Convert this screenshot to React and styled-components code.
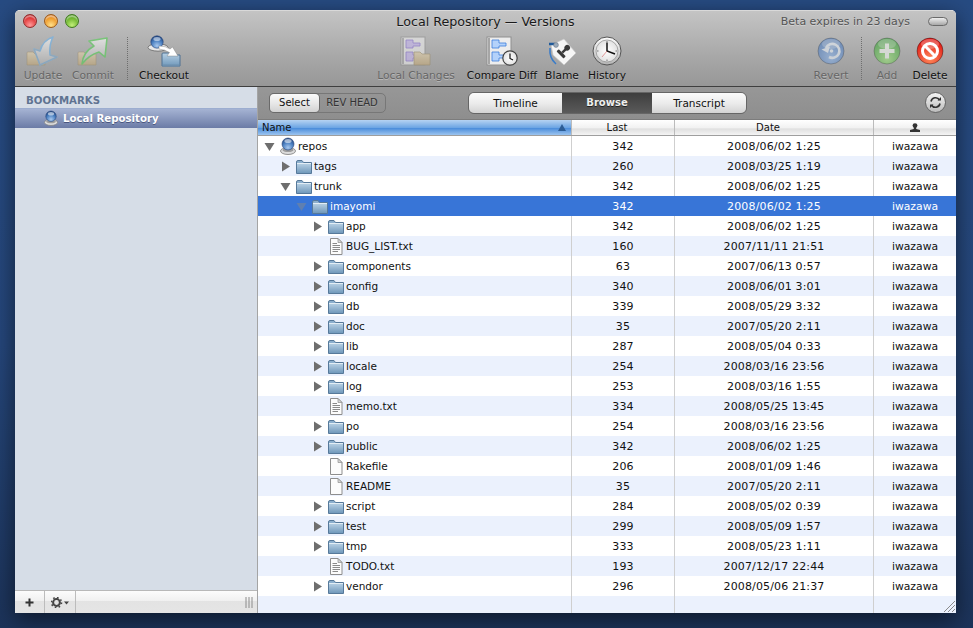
import React from 'react';
import styled, { createGlobalStyle } from 'styled-components';

const FONT = '"DejaVu Sans", "Liberation Sans", sans-serif';

const rows = [
  { level: 0, type: 'repo', open: true, name: 'repos', last: 342, date: '2008/06/02 1:25' },
  { level: 1, type: 'folder', name: 'tags', last: 260, date: '2008/03/25 1:19' },
  { level: 1, type: 'folder', open: true, name: 'trunk', last: 342, date: '2008/06/02 1:25' },
  { level: 2, type: 'folder', open: true, selected: true, name: 'imayomi', last: 342, date: '2008/06/02 1:25' },
  { level: 3, type: 'folder', name: 'app', last: 342, date: '2008/06/02 1:25' },
  { level: 3, type: 'text', name: 'BUG_LIST.txt', last: 160, date: '2007/11/11 21:51' },
  { level: 3, type: 'folder', name: 'components', last: 63, date: '2007/06/13 0:57' },
  { level: 3, type: 'folder', name: 'config', last: 340, date: '2008/06/01 3:01' },
  { level: 3, type: 'folder', name: 'db', last: 339, date: '2008/05/29 3:32' },
  { level: 3, type: 'folder', name: 'doc', last: 35, date: '2007/05/20 2:11' },
  { level: 3, type: 'folder', name: 'lib', last: 287, date: '2008/05/04 0:33' },
  { level: 3, type: 'folder', name: 'locale', last: 254, date: '2008/03/16 23:56' },
  { level: 3, type: 'folder', name: 'log', last: 253, date: '2008/03/16 1:55' },
  { level: 3, type: 'text', name: 'memo.txt', last: 334, date: '2008/05/25 13:45' },
  { level: 3, type: 'folder', name: 'po', last: 254, date: '2008/03/16 23:56' },
  { level: 3, type: 'folder', name: 'public', last: 342, date: '2008/06/02 1:25' },
  { level: 3, type: 'file', name: 'Rakefile', last: 206, date: '2008/01/09 1:46' },
  { level: 3, type: 'file', name: 'README', last: 35, date: '2007/05/20 2:11' },
  { level: 3, type: 'folder', name: 'script', last: 284, date: '2008/05/02 0:39' },
  { level: 3, type: 'folder', name: 'test', last: 299, date: '2008/05/09 1:57' },
  { level: 3, type: 'folder', name: 'tmp', last: 333, date: '2008/05/23 1:11' },
  { level: 3, type: 'text', name: 'TODO.txt', last: 193, date: '2007/12/17 22:44' },
  { level: 3, type: 'folder', name: 'vendor', last: 296, date: '2008/05/06 21:37' },
];

const Global = createGlobalStyle`
  html, body { margin: 0; height: 100%; }
  body {
    background: linear-gradient(180deg, #274b82 0%, #25467a 55%, #1c3359 100%);
    font-family: ${FONT};
    overflow: hidden;
  }
`;

const Desktop = styled.div`
  width: 973px;
  height: 628px;
  padding: 10px 0 0 15px;
  box-sizing: border-box;
`;

const Window = styled.div`
  width: 941px;
  height: 603px;
  display: flex;
  flex-direction: column;
  border-radius: 5px 5px 0 0;
  overflow: hidden;
  box-shadow: 0 6px 22px rgba(0, 0, 0, 0.55);
  background: #fff;
`;

const Chrome = styled.div`
  height: 76px;
  flex: none;
  box-sizing: border-box;
  border-top: 1px solid #d9d9d9;
  background: linear-gradient(180deg, #c4c4c4 0%, #a8a8a8 60%, #979797 100%);
`;

const TitleRow = styled.div`
  height: 20px;
  display: grid;
  grid-template-columns: 1fr auto 1fr;
  align-items: center;
  padding: 0 8px;
`;

const Lights = styled.div`
  display: flex;
  gap: 7px;
  align-items: center;
`;

const Light = styled.span`
  width: 14px;
  height: 14px;
  border-radius: 50%;
  box-sizing: border-box;
  border: 1px solid ${p => p.$edge};
  background: radial-gradient(circle at 50% 85%, ${p => p.$glow} 0%, ${p => p.$base} 60%, ${p => p.$dark} 100%);
  box-shadow: inset 0 2px 1px rgba(255, 255, 255, 0.45);
`;

const Title = styled.div`
  font-size: 12.7px;
  color: #1a1a1a;
  text-shadow: 0 1px 0 rgba(255, 255, 255, 0.35);
`;

const Beta = styled.div`
  display: flex;
  justify-content: flex-end;
  align-items: center;
  gap: 18px;
  font-size: 11px;
  color: #555;
  text-shadow: 0 1px 0 rgba(255, 255, 255, 0.35);
`;

const Pill = styled.span`
  width: 20px;
  height: 9px;
  box-sizing: border-box;
  border-radius: 5px;
  border: 1px solid #6a6a6a;
  background: linear-gradient(180deg, #eee, #a8a8a8);
`;

const Toolbar = styled.div`
  height: 55px;
  display: grid;
  grid-template-columns: 356px 1fr auto;
  padding: 0 8px 0 3px;
`;

const ToolGroup = styled.div`
  display: flex;
`;

const Tool = styled.div`
  width: ${p => p.$w}px;
  flex: none;
  display: flex;
  flex-direction: column;
  align-items: center;
  font-size: 10.7px;
  line-height: 13px;
  white-space: nowrap;
  color: ${p => (p.$off ? '#666' : '#111')};
  text-shadow: 0 1px 0 rgba(255, 255, 255, 0.3);
`;

const ToolIcon = styled.div`
  height: 38px;
  box-sizing: border-box;
  padding-top: 2px;
  display: flex;
  align-items: center;
  justify-content: center;
  opacity: ${p => (p.$off ? 0.6 : 1)};
`;

const Dotted = styled.div`
  width: ${p => p.$w}px;
  flex: none;
  display: flex;
  justify-content: center;
  padding-top: 6px;
  height: 43px;
  &::before {
    content: '';
    border-left: 1px dotted #6e6e6e;
  }
`;

const Body = styled.div`
  flex: 1;
  min-height: 0;
  display: flex;
  border-top: 1px solid #3f3f3f;
`;

const Sidebar = styled.div`
  width: 242px;
  flex: none;
  display: flex;
  flex-direction: column;
  background: #d6dde7;
  border-right: 1px solid #a4a4a4;
`;

const SideHead = styled.div`
  height: 21px;
  box-sizing: border-box;
  padding: 7px 0 0 11px;
  font-size: 10.2px;
  line-height: 13px;
  font-weight: bold;
  color: #5f7391;
`;

const SideItem = styled.div`
  height: 20px;
  display: flex;
  align-items: center;
  gap: 5px;
  padding: 0 0 1px 29px;
  font-size: 10.2px;
  font-weight: bold;
  color: #fff;
  text-shadow: 0 1px 0 rgba(40, 50, 90, 0.6);
  border-top: 1px solid #9cadd0;
  box-sizing: border-box;
  background: linear-gradient(180deg, #a5b3d3, #6b7ba6);
`;

const SideFill = styled.div`
  flex: 1;
`;

const SideBar = styled.div`
  height: 23px;
  display: flex;
  align-items: stretch;
  box-sizing: border-box;
  border-top: 1px solid #b8b8b8;
  background: linear-gradient(180deg, #fcfcfc 0%, #f0f0f0 45%, #e3e3e3 46%, #e5e5e5 100%);
`;

const SideBtn = styled.div`
  width: ${p => p.$w}px;
  display: flex;
  align-items: center;
  justify-content: center;
  border-right: 1px solid #bcbcbc;
  box-sizing: border-box;
`;

const Grip = styled.div`
  flex: 1;
  display: flex;
  justify-content: flex-end;
  align-items: center;
  padding-right: 4px;
`;

const Main = styled.div`
  flex: 1;
  min-width: 0;
  display: flex;
  flex-direction: column;
  position: relative;
`;

const SubBar = styled.div`
  height: 33px;
  flex: none;
  box-sizing: border-box;
  padding: 6px 10px 0 11px;
  display: flex;
  align-items: flex-start;
  background: linear-gradient(180deg, #979797, #8e8e8e);
  border-bottom: 1px solid #7c7c7c;
`;

const RevBox = styled.div`
  width: 117px;
  height: 20px;
  display: flex;
  box-sizing: border-box;
  border: 1px solid #777;
  border-radius: 5px;
  font-size: 10px;
  line-height: 18px;
  color: #333;
`;

const SelectBtn = styled.div`
  width: 49px;
  text-align: center;
  color: #111;
  border-radius: 4px;
  box-shadow: 0 0 0 1px #6a6a6a;
  background: linear-gradient(180deg, #fafafa, #e8e8e8 50%, #d2d2d2);
`;

const RevText = styled.div`
  flex: 1;
  text-align: center;
  text-shadow: 0 1px 0 rgba(255, 255, 255, 0.2);
`;

const Tabs = styled.div`
  margin-left: 82px;
  margin-top: -1px;
  display: flex;
  height: 22px;
  box-sizing: border-box;
  border: 1px solid #666;
  border-radius: 6px;
  overflow: hidden;
`;

const Tab = styled.div`
  width: ${p => p.$w}px;
  text-align: center;
  font-size: ${p => (p.$on ? 10 : 10.5)}px;
  line-height: 20px;
  color: ${p => (p.$on ? '#eee' : '#111')};
  font-weight: ${p => (p.$on ? 'bold' : 'normal')};
  text-shadow: ${p => (p.$on ? '0 1px 0 #222' : 'none')};
  background: ${p =>
    p.$on
      ? 'linear-gradient(180deg, #3e3e3e, #5a5a5a)'
      : 'linear-gradient(180deg, #fbfbfb, #ececec 50%, #d3d3d3)'};
`;

const Refresh = styled.div`
  margin-left: auto;
  margin-top: -1px;
  width: 21px;
  height: 21px;
  box-sizing: border-box;
  border-radius: 50%;
  border: 1px solid #666;
  display: flex;
  align-items: center;
  justify-content: center;
  background: linear-gradient(180deg, #f4f4f4, #bcbcbc);
`;

const COLS = '314px 103px 199px 1fr';

const HeadRow = styled.div`
  height: 16px;
  flex: none;
  display: grid;
  grid-template-columns: ${COLS};
  box-sizing: border-box;
  border-bottom: 1px solid #9e9e9e;
`;

const HeadCell = styled.div`
  display: flex;
  align-items: center;
  justify-content: ${p => (p.$left ? 'space-between' : 'center')};
  box-sizing: border-box;
  padding: ${p => (p.$left ? '0 5px 0 4px' : p.$shift ? '0 12px 0 0' : '0')};
  font-size: 10px;
  color: #111;
  border-right: 1px solid #bbb;
  background: ${p =>
    p.$on
      ? 'linear-gradient(180deg, #b6d3f2, #6ea6e4 50%, #4b8ddb 55%, #9cc4ef)'
      : 'linear-gradient(180deg, #fff, #f2f2f2 50%, #e0e0e0 60%, #f4f4f4)'};
  &:last-child { border-right: 0; }
`;

const Rows = styled.div`
  flex: 1;
  min-height: 0;
  display: flex;
  flex-direction: column;
`;

const Row = styled.div`
  height: 20px;
  flex: none;
  display: grid;
  grid-template-columns: ${COLS};
  font-size: 10.5px;
  color: ${p => (p.$selected ? '#fff' : '#111')};
  background: ${p => (p.$selected ? '#3875d7' : p.$alt ? '#ebf1fd' : '#fff')};
`;

const Filler = styled(Row)`
  flex: 1;
  height: auto;
`;

const Cell = styled.div`
  display: flex;
  align-items: center;
  justify-content: center;
  white-space: nowrap;
  box-sizing: border-box;
  border-right: 1px solid ${p => (p.$selected ? 'transparent' : '#cfcfcf')};
  &:last-child { border-right: 0; }
`;

const NumCell = styled(Cell)`
  font-size: 11px;
  letter-spacing: 0.15px;
`;

const UserCell = styled(Cell)`
  font-size: 10.8px;
`;

const NameCell = styled(Cell)`
  justify-content: flex-start;
  padding-left: ${p => p.$level * 16 + 6}px;
`;

const Disclosure = styled.span`
  width: 11px;
  height: 11px;
  flex: none;
  display: flex;
  align-items: center;
  justify-content: center;
  margin-right: 5px;
`;

const NameText = styled.span`
  margin-left: 2px;
`;

const Resize = styled.svg`
  position: absolute;
  right: 1px;
  bottom: 1px;
`;

const Defs = styled.svg`
  display: block;
  width: 0;
  height: 0;
`;

const SharedDefs = () => (
  <Defs>
    <defs>
      <linearGradient id="folderBody" x1="0" y1="0" x2="0" y2="1">
        <stop offset="0" stopColor="#b7d0e4" />
        <stop offset="1" stopColor="#7199bb" />
      </linearGradient>
      <linearGradient id="folderTan" x1="0" y1="0" x2="0" y2="1">
        <stop offset="0" stopColor="#e6d5b0" />
        <stop offset="1" stopColor="#c3a877" />
      </linearGradient>
      <linearGradient id="silver" x1="0" y1="0" x2="0" y2="1">
        <stop offset="0" stopColor="#fdfdfd" />
        <stop offset="1" stopColor="#b4b4b4" />
      </linearGradient>
      <radialGradient id="ball" cx="0.5" cy="0.8" r="0.8">
        <stop offset="0" stopColor="#a8c8ee" />
        <stop offset="0.55" stopColor="#4a7fc0" />
        <stop offset="1" stopColor="#1d3f78" />
      </radialGradient>
      <radialGradient id="blueBtn" cx="0.5" cy="0.75" r="0.8">
        <stop offset="0" stopColor="#8fb6ea" />
        <stop offset="1" stopColor="#3a6cb4" />
      </radialGradient>
      <radialGradient id="greenBtn" cx="0.5" cy="0.8" r="0.8">
        <stop offset="0" stopColor="#9fe47c" />
        <stop offset="1" stopColor="#2d9a2d" />
      </radialGradient>
      <radialGradient id="redBtn" cx="0.5" cy="0.8" r="0.8">
        <stop offset="0" stopColor="#ff8a5a" />
        <stop offset="1" stopColor="#dd0f0f" />
      </radialGradient>
      <radialGradient id="clockFace" cx="0.5" cy="0.5" r="0.6">
        <stop offset="0" stopColor="#ffffff" />
        <stop offset="1" stopColor="#dcdcdc" />
      </radialGradient>
    </defs>
  </Defs>
);

const Triangle = ({ open, selected }) => (
  <svg width="11" height="11" viewBox="0 0 11 11">
    {open ? (
      <path d="M0.5 2 L10.5 2 L5.5 10 Z" fill={selected ? '#5f7fb0' : '#6e6e6e'} />
    ) : (
      <path d="M2 0.5 L10 5.5 L2 10.5 Z" fill="#6e6e6e" />
    )}
  </svg>
);

const RepoIcon = ({ size = 16 }) => (
  <svg width={size} height={size + 2} viewBox="0 0 16 18">
    <ellipse cx="8" cy="14" rx="7.5" ry="3.5" fill="#dcdcdc" stroke="#7b7b7b" strokeWidth="0.8" />
    <ellipse cx="8" cy="13" rx="5.5" ry="2" fill="#9d9d9d" />
    <circle cx="8" cy="7" r="6" fill="url(#ball)" stroke="#27457a" strokeWidth="0.6" />
    <ellipse cx="8" cy="4" rx="3.6" ry="2" fill="#fff" opacity="0.55" />
  </svg>
);

const FolderIcon = () => (
  <svg width="16" height="15" viewBox="0 0 16 15">
    <path d="M0.5 3 Q0.5 1.5 2 1.5 L6 1.5 L7.5 3.5 L15.5 3.5 L15.5 14.5 L0.5 14.5 Z" fill="#8cafcd" stroke="#56799a" />
    <rect x="1" y="4.5" width="14" height="9.5" fill="url(#folderBody)" />
    <path d="M1 4.5 H15" stroke="#e2edf5" />
  </svg>
);

const DocIcon = ({ lines }) => (
  <svg width="16" height="17" viewBox="-1 0 16 17">
    <path d="M1.5 0.5 H9 L13 4.5 V16.5 H1.5 Z" fill="#fcfcfc" stroke="#8e8e8e" />
    <path d="M9 0.5 V4.5 H13 Z" fill="#d8d8d8" stroke="#8e8e8e" strokeWidth="0.7" />
    {lines && <path d="M3.5 5.5 H8 M3.5 7.5 H11 M3.5 9.5 H11 M3.5 11.5 H11 M3.5 13.5 H9" stroke="#8a8a8a" />}
  </svg>
);

const RowIcon = ({ type }) => {
  if (type === 'repo') return <RepoIcon />;
  if (type === 'folder') return <FolderIcon />;
  return <DocIcon lines={type === 'text'} />;
};

const UpdateIcon = () => (
  <svg width="36" height="32" viewBox="0 0 36 32">
    <path d="M2 18 Q2 17 3 17 H8 L10 19 H20 V30 H2 Z" fill="url(#folderTan)" stroke="#a08a62" strokeWidth="0.6" />
    <path d="M28 2 Q18 5 15 16 L9 14 L15 30 L32 22 L25 20 Q24 10 28 2 Z" fill="url(#silver)" stroke="#6cb2ea" strokeWidth="1.6" strokeLinejoin="round" />
    <path d="M15 16 L9 14 L15 30 L32 22 L25 20" fill="none" stroke="#9a9a9a" strokeWidth="0.5" />
  </svg>
);

const CommitIcon = () => (
  <svg width="36" height="32" viewBox="0 0 36 32">
    <path d="M3 18 Q3 17 4 17 H9 L11 19 H21 V30 H3 Z" fill="url(#folderTan)" stroke="#a08a62" strokeWidth="0.6" />
    <path d="M32 3 L14 6 L19 11 Q8 17 7 29 Q14 20 24 17 L30 22 Z" fill="url(#silver)" stroke="#55d055" strokeWidth="1.6" strokeLinejoin="round" />
  </svg>
);

const CheckoutIcon = () => (
  <svg width="34" height="34" viewBox="0 0 34 34">
    <ellipse cx="11" cy="13.5" rx="10" ry="3.6" fill="#e8e8e8" stroke="#5c5c5c" strokeWidth="0.7" />
    <circle cx="10" cy="8" r="6.2" fill="url(#ball)" stroke="#27457a" strokeWidth="0.6" />
    <ellipse cx="10" cy="5" rx="3.6" ry="2" fill="#fff" opacity="0.5" />
    <path d="M15 20 Q15 19 16 19 H24 L26 21 H33 V32 H15 Z" fill="url(#folderBody)" stroke="#4e7192" />
    <rect x="15.5" y="30.5" width="17" height="2" fill="#6d8fae" />
    <path d="M12 12 Q19 12 23 15 L25.5 13 L31 22 L20 22 L22.5 18.5 Q18 15.5 12 15 Z" fill="#fff" stroke="#777" strokeWidth="0.4" />
  </svg>
);

const DiffPage = ({ tint, edge }) => (
  <>
    <rect x="1" y="1" width="24" height="28" fill="#ededed" stroke="#8f8f8f" />
    <path d="M2 2 H4 V28 H2 Z" fill="#777" opacity="0.6" />
    <path d="M6 4 H13 V7 H20 V10 H13 V12 H6 Z" fill={tint} stroke={edge} strokeWidth="0.8" />
    <path d="M6 16 H13 V19 H20 V22 H13 V25 H6 Z" fill={tint} stroke={edge} strokeWidth="0.8" />
  </>
);

const LocalChangesIcon = () => (
  <svg width="32" height="30" viewBox="0 0 32 30">
    <DiffPage tint="#c8b8f2" edge="#8369d4" />
    <path d="M14 16 H20 L22 18 H30 V29 H14 Z" fill="url(#folderTan)" stroke="#9a8860" strokeWidth="0.7" />
  </svg>
);

const CompareDiffIcon = () => (
  <svg width="32" height="30" viewBox="0 0 32 30">
    <DiffPage tint="#b4d2fa" edge="#3e7fdc" />
    <circle cx="24" cy="22" r="7.2" fill="url(#clockFace)" stroke="#444" strokeWidth="1.2" />
    <path d="M24 17.5 V22.5 L27 24" fill="none" stroke="#111" strokeWidth="1.2" />
  </svg>
);

const BlameIcon = () => (
  <svg width="30" height="30" viewBox="0 0 30 30">
    <path d="M4 9 L17 3 L29 17 L17 29 L6 19 Z" fill="#f6f6f6" stroke="#c4c4c4" strokeWidth="0.7" strokeLinejoin="round" />
    <path d="M2 8 H8" stroke="#1f5a9a" strokeWidth="2.6" />
    <circle cx="9" cy="9" r="2.4" fill="#9aaaba" stroke="#6a7684" strokeWidth="0.6" />
    <path d="M3 12 Q2 22 9 28" fill="none" stroke="#3a7cc8" strokeWidth="1.6" />
    <g transform="rotate(45 16 16)" fill="#3a3a3a">
      <circle cx="16" cy="10" r="2.8" />
      <rect x="14.8" y="12" width="2.4" height="5" />
      <rect x="11" y="17" width="10" height="3.2" rx="0.8" />
    </g>
  </svg>
);

const HistoryIcon = () => (
  <svg width="30" height="30" viewBox="0 0 30 30">
    <circle cx="15" cy="15" r="14" fill="url(#silver)" stroke="#555" />
    <circle cx="15" cy="15" r="11" fill="url(#clockFace)" stroke="#8d8d8d" strokeWidth="0.7" />
    <path d="M15 6.5 V15 L23 18" fill="none" stroke="#111" strokeWidth="1.5" />
    <path d="M15 15 L10 21" stroke="#d87070" strokeWidth="0.7" />
    <path d="M15 5 V6.5 M15 23.5 V25 M5 15 H6.5 M23.5 15 H25" stroke="#777" />
  </svg>
);

const RoundBtn = ({ fill, children }) => (
  <svg width="28" height="28" viewBox="0 0 28 28">
    <circle cx="14" cy="14" r="13" fill={`url(#${fill})`} stroke="rgba(0,0,0,0.35)" />
    <ellipse cx="14" cy="7" rx="9" ry="5" fill="#fff" opacity="0.28" />
    {children}
  </svg>
);

const RevertIcon = () => (
  <RoundBtn fill="blueBtn">
    <path d="M9 11 A7 7 0 1 1 12 20" fill="none" stroke="#e4ecf6" strokeWidth="2.6" />
    <path d="M4.5 12.5 L13 9.5 L11 16 Z" fill="#e4ecf6" />
    <circle cx="14.5" cy="14" r="1.8" fill="#e4ecf6" />
  </RoundBtn>
);

const AddIcon = () => (
  <RoundBtn fill="greenBtn">
    <path d="M14 6.5 V21.5 M6.5 14 H21.5" stroke="#f2f8ef" strokeWidth="4" />
  </RoundBtn>
);

const DeleteIcon = () => (
  <RoundBtn fill="redBtn">
    <circle cx="14" cy="14" r="7.5" fill="none" stroke="#fff" strokeWidth="3" />
    <path d="M8.8 8.8 L19.2 19.2" stroke="#fff" strokeWidth="3" />
  </RoundBtn>
);

const App = () => (
  <Desktop>
    <Global />
    <SharedDefs />
    <Window>
      <Chrome>
        <TitleRow>
          <Lights>
            <Light $edge="#8e2a2a" $base="#e23a3a" $dark="#a81010" $glow="#ff9a9a" />
            <Light $edge="#9a5a1a" $base="#ee9a2a" $dark="#c8601a" $glow="#ffe08a" />
            <Light $edge="#3f7a1f" $base="#6eb52e" $dark="#3c8a14" $glow="#c2ef7a" />
          </Lights>
          <Title>Local Repository — Versions</Title>
          <Beta>
            Beta expires in 23 days
            <Pill />
          </Beta>
        </TitleRow>
        <Toolbar>
          <ToolGroup>
            <Tool $w={50} $off><ToolIcon $off><UpdateIcon /></ToolIcon>Update</Tool>
            <Tool $w={50} $off><ToolIcon $off><CommitIcon /></ToolIcon>Commit</Tool>
            <Dotted $w={18} />
            <Tool $w={56}><ToolIcon><CheckoutIcon /></ToolIcon>Checkout</Tool>
          </ToolGroup>
          <ToolGroup>
            <Tool $w={84} $off><ToolIcon $off><LocalChangesIcon /></ToolIcon>Local Changes</Tool>
            <Tool $w={88}><ToolIcon><CompareDiffIcon /></ToolIcon>Compare Diff</Tool>
            <Tool $w={32}><ToolIcon><BlameIcon /></ToolIcon>Blame</Tool>
            <Tool $w={58}><ToolIcon><HistoryIcon /></ToolIcon>History</Tool>
          </ToolGroup>
          <ToolGroup>
            <Tool $w={58} $off><ToolIcon $off><RevertIcon /></ToolIcon>Revert</Tool>
            <Dotted $w={2} />
            <Tool $w={50} $off><ToolIcon $off><AddIcon /></ToolIcon>Add</Tool>
            <Tool $w={36}><ToolIcon><DeleteIcon /></ToolIcon>Delete</Tool>
          </ToolGroup>
        </Toolbar>
      </Chrome>
      <Body>
        <Sidebar>
          <SideHead>BOOKMARKS</SideHead>
          <SideItem>
            <RepoIcon size={14} />
            Local Repository
          </SideItem>
          <SideFill />
          <SideBar>
            <SideBtn $w={30}>
              <svg width="9" height="9" viewBox="0 0 9 9">
                <path d="M4.5 0.5 V8.5 M0.5 4.5 H8.5" stroke="#333" strokeWidth="2" />
              </svg>
            </SideBtn>
            <SideBtn $w={31}>
              <svg width="18" height="11" viewBox="0 0 18 11">
                <circle cx="5.5" cy="5.5" r="3.4" fill="none" stroke="#444" strokeWidth="2" />
                <circle cx="5.5" cy="5.5" r="5" fill="none" stroke="#444" strokeWidth="1.6" strokeDasharray="1.6 2.3" />
                <path d="M13 4.5 H18 L15.5 7.5 Z" fill="#444" />
              </svg>
            </SideBtn>
            <Grip>
              <svg width="8" height="11" viewBox="0 0 8 11">
                <path d="M1 0 V11 M4 0 V11 M7 0 V11" stroke="#8c8c8c" />
              </svg>
            </Grip>
          </SideBar>
        </Sidebar>
        <Main>
          <SubBar>
            <RevBox>
              <SelectBtn>Select</SelectBtn>
              <RevText>REV HEAD</RevText>
            </RevBox>
            <Tabs>
              <Tab $w={93}>Timeline</Tab>
              <Tab $w={90} $on>Browse</Tab>
              <Tab $w={94}>Transcript</Tab>
            </Tabs>
            <Refresh>
              <svg width="13" height="13" viewBox="0 0 13 13">
                <path d="M2 5.5 A4.6 4.6 0 0 1 10.5 4 M11 7.5 A4.6 4.6 0 0 1 2.5 9" fill="none" stroke="#333" strokeWidth="1.6" />
                <path d="M8.5 4.5 H12 V1 Z M4.5 8.5 H1 V12 Z" fill="#333" />
              </svg>
            </Refresh>
          </SubBar>
          <HeadRow>
            <HeadCell $left $on>
              Name
              <svg width="8" height="7" viewBox="0 0 8 7"><path d="M0 7 L4 0 L8 7 Z" fill="#2c5d96" /></svg>
            </HeadCell>
            <HeadCell $shift>Last</HeadCell>
            <HeadCell $shift>Date</HeadCell>
            <HeadCell>
              <svg width="10" height="9" viewBox="0 0 10 9">
                <circle cx="5" cy="2.6" r="2.4" fill="#333" />
                <path d="M3.8 4 H6.2 V6 L10 7 V9 H0 V7 L3.8 6 Z" fill="#333" />
              </svg>
            </HeadCell>
          </HeadRow>
          <Rows>
            {rows.map((r, i) => (
              <Row key={r.name} $alt={i % 2 === 1} $selected={r.selected}>
                <NameCell $level={r.level} $selected={r.selected}>
                  <Disclosure>
                    {r.type !== 'text' && r.type !== 'file' && <Triangle open={r.open} selected={r.selected} />}
                  </Disclosure>
                  <RowIcon type={r.type} />
                  <NameText>{r.name}</NameText>
                </NameCell>
                <NumCell $selected={r.selected}>{r.last}</NumCell>
                <NumCell $selected={r.selected}>{r.date}</NumCell>
                <UserCell>iwazawa</UserCell>
              </Row>
            ))}
            <Filler $alt>
              <Cell /><Cell /><Cell /><Cell />
            </Filler>
          </Rows>
          <Resize width="12" height="12" viewBox="0 0 12 12">
            <path d="M1 12 L12 1 M5 12 L12 5 M9 12 L12 9" stroke="#8a8a8a" />
          </Resize>
        </Main>
      </Body>
    </Window>
  </Desktop>
);

export default App;
